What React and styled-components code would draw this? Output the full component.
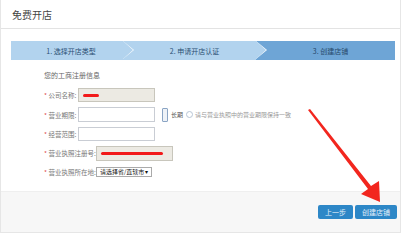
import styled, { createGlobalStyle } from "styled-components"

const Global = createGlobalStyle`
body {
  margin: 0;
  background: #fff;
  font-family: "Noto Sans CJK SC", "Liberation Sans", sans-serif;
}
`

const Panel = styled.div`
position: relative;
width: 401px;
height: 233px;
box-sizing: border-box;
border: 1px solid #e6e6e6;
border-top: none;
display: flex;
flex-direction: column;
`
const Header = styled.div`
height: 28px;
border-bottom: 1px solid #e3e3e3;
display: flex;
align-items: center;
padding-left: 11px;
font-size: 10px;
color: #444;
`
const Body = styled.div`
flex: 1;
padding: 12px 6px 0 10px;
`
const StepBar = styled.div`
display: flex;
height: 19px;
width: 384px;
`
const Step = styled.div`
position: relative;
width: ${p => p.w}px;
background: ${p => (p.active ? "#6ea5d6" : "#b2d3ee")};
color: ${p => (p.active ? "#27496b" : "#2b4f73")};
font-size: 7px;
display: flex;
align-items: center;
justify-content: center;
padding-left: ${p => (p.first ? 8 : 10)}px;
box-sizing: border-box;
${p => !p.last && `
  &::before {
    content: "";
    position: absolute;
    right: -11px;
    top: 0;
    border-left: 11px solid #fff;
    border-top: 9.5px solid transparent;
    border-bottom: 9.5px solid transparent;
    z-index: 1;
  }
  &::after {
    content: "";
    position: absolute;
    right: -10px;
    top: 0;
    border-left: 10px solid ${p.active ? "#6ea5d6" : "#b2d3ee"};
    border-top: 9.5px solid transparent;
    border-bottom: 9.5px solid transparent;
    z-index: 2;
  }
`}
`
const Form = styled.div`
padding: 10px 0 0 33px;
display: flex;
flex-direction: column;
`
const Heading = styled.div`
font-size: 7px;
color: #666;
margin-bottom: 5px;
`
const Row = styled.div`
display: flex;
align-items: center;
height: ${p => p.h || 19}px;
`
const Label = styled.span`
font-size: 6.5px;
color: #777;
width: ${p => p.w || 34}px;
white-space: nowrap;
&::before {
  content: "* ";
  color: #e04a4a;
}
`
const Input = styled.div`
position: relative;
width: ${p => p.w || 76}px;
height: ${p => p.h || 14}px;
box-sizing: border-box;
border: 1px solid ${p => (p.disabled ? "#c8c6bc" : "#c9cdd4")};
background: ${p => (p.disabled ? "#eceae3" : "#fff")};
`
const Scribble = styled.div`
position: absolute;
left: 4px;
top: 50%;
width: ${p => p.w}px;
height: 3px;
margin-top: -1px;
border-radius: 2px;
background: #f21a1a;
`
const Check = styled.span`
width: 4px;
height: 12px;
margin-left: 7px;
border: 1px solid #8aa4c4;
border-radius: 1px;
background: #eef2f7;
`
const Small = styled.span`
font-size: 6px;
color: ${p => p.c || "#777"};
margin-left: 3px;
display: flex;
align-items: center;
gap: 2px;
`
const Radio = styled.span`
width: 5px;
height: 5px;
border: 1px solid #b8c6d6;
border-radius: 50%;
`
const Select = styled.div`
width: 56px;
height: 10px;
box-sizing: border-box;
border: 1px solid #aaa;
font-size: 6px;
color: #111;
display: flex;
align-items: center;
justify-content: space-between;
padding: 0 3px;
`
const Footer = styled.div`
height: 40px;
background: #f7f7f7;
border-top: 1px solid #efefef;
display: flex;
justify-content: flex-end;
align-items: center;
gap: 2px;
padding-right: 3px;
`
const Button = styled.button`
height: 14px;
width: ${p => p.w}px;
border: none;
border-radius: 2px;
background: #2d87c7;
color: #e3f0fa;
font-family: inherit;
font-size: 7px;
padding: 0;
cursor: pointer;
`
const Arrow = styled.svg`
position: absolute;
left: 0;
top: 0;
pointer-events: none;
`

const App = () => {
  return (
    <>
      <Global />
      <Panel>
        <Header>免费开店</Header>
        <Body>
          <StepBar>
            <Step w={112} first>1. 选择开店类型</Step>
            <Step w={133}>2. 申请开店认证</Step>
            <Step w={139} active last>3. 创建店铺</Step>
          </StepBar>
          <Form>
            <Heading>您的工商注册信息</Heading>
            <Row h={20}>
              <Label>公司名称:</Label>
              <Input disabled w={77}><Scribble w={16} /></Input>
            </Row>
            <Row h={19}>
              <Label>营业期限:</Label>
              <Input w={77} h={15} />
              <Check />
              <Small c="#555">长期</Small>
              <Small c="#999"><Radio />请与营业执照中的营业期限保持一致</Small>
            </Row>
            <Row h={19}>
              <Label>经营范围:</Label>
              <Input w={77} />
            </Row>
            <Row h={20}>
              <Label w={52}>营业执照注册号:</Label>
              <Input disabled w={77} h={15}><Scribble w={62} /></Input>
            </Row>
            <Row h={17}>
              <Label w={52}>营业执照所在地:</Label>
              <Select>请选择省/直辖市<span>▾</span></Select>
            </Row>
          </Form>
        </Body>
        <Footer>
          <Button w={35}>上一步</Button>
          <Button w={42}>创建店铺</Button>
        </Footer>
        <Arrow width="401" height="233">
          <polygon points="307,110 309,109 370,186 378,181 379,202 360,194 367,189" fill="#f2261e" />
        </Arrow>
      </Panel>
    </>
  )
}

export default App
